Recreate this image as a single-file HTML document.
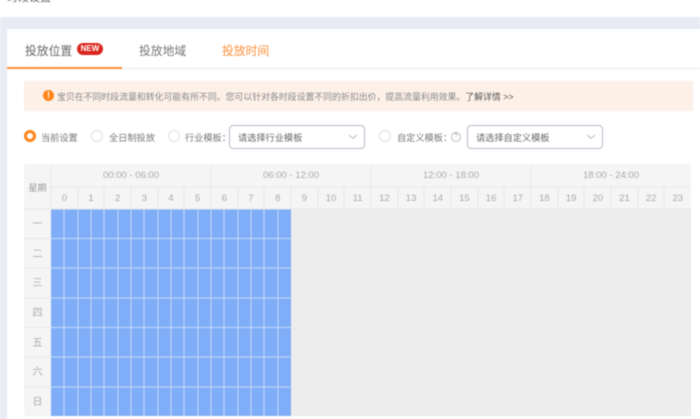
<!DOCTYPE html>
<html><head><meta charset="utf-8">
<style>
*{box-sizing:border-box}
html,body{margin:0;padding:0;width:700px;height:419px;overflow:hidden;background:#fff}
body{font-family:"Liberation Sans","Noto Sans CJK SC",sans-serif;position:relative}
#w{position:absolute;inset:0;filter:blur(.5px)}
.a{position:absolute;white-space:nowrap}
.r{position:absolute;width:12px;height:12px;border:1px solid #dcdfe6;border-radius:50%;background:#fff;top:130px}
.sel{position:absolute;top:125px;height:24px;background:#fff;border:1px solid #b9bcc8;border-radius:4px;font-size:9.2px;color:#666;line-height:24px;padding-left:8px}
.sel svg{position:absolute;right:6px;top:7px}
.c{position:absolute;text-align:center;color:#aaa}
</style></head><body><div id="w">
<div class="a" style="left:7px;top:-11px;font-size:11px;color:#666">时段设置</div>
<div class="a" style="left:0;top:17px;width:700px;height:402px;background:#e8ebf3"></div>
<div class="a" style="left:7px;top:29px;width:693px;height:390px;background:#fff"></div>
<div class="a" style="left:7px;top:68px;width:693px;height:1px;background:#eaeaea"></div>
<div class="a" style="left:7px;top:67px;width:115px;height:2px;background:#ff8c35"></div>
<div class="a" style="left:25px;top:43px;font-size:11.8px;line-height:16px;color:#666">投放位置</div>
<div class="a" style="left:77px;top:43px;width:26px;height:12px;border-radius:6px;background:#d9251d;color:#fff;font-size:8px;font-weight:bold;line-height:12px;text-align:center">NEW</div>
<div class="a" style="left:139px;top:43px;font-size:11.8px;line-height:16px;color:#777">投放地域</div>
<div class="a" style="left:222px;top:43px;font-size:11.8px;line-height:16px;color:#ff8f3a">投放时间</div>

<div class="a" style="left:24px;top:81px;width:669px;height:30px;background:#fdf0e7"></div>
<div class="a" style="left:43px;top:90px;width:11px;height:11px;border-radius:50%;background:#ff8417;color:#fff;font-size:9px;font-weight:bold;line-height:11px;text-align:center">!</div>
<div class="a" style="left:57px;top:90px;font-size:8.9px;line-height:14px;color:#888">宝贝在不同时段流量和转化可能有所不同。您可以针对各时段设置不同的折扣出价，提高流量利用效果。<span style="color:#555">了解详情 &gt;&gt;</span></div>

<div class="r" style="left:24px;border:3px solid #ff8417"></div>
<div class="a" style="left:41px;top:131px;font-size:9.2px;line-height:14px;color:#777">当前设置</div>
<div class="r" style="left:91px"></div>
<div class="a" style="left:109px;top:131px;font-size:9.2px;line-height:14px;color:#777">全日制投放</div>
<div class="r" style="left:168px"></div>
<div class="a" style="left:185px;top:131px;font-size:9.2px;line-height:14px;color:#777">行业模板：</div>
<div class="sel" style="left:229px;width:136px">请选择行业模板<svg width="10" height="8"><path d="M1 2l4 3.5L9 2" fill="none" stroke="#bbb"/></svg></div>
<div class="r" style="left:379px"></div>
<div class="a" style="left:397px;top:131px;font-size:9.2px;line-height:14px;color:#777">自定义模板：</div>
<div class="a" style="left:451px;top:132px;width:10px;height:10px;border:1px solid #bbb;border-radius:50%;font-size:7px;line-height:8px;text-align:center;color:#aaa">?</div>
<div class="sel" style="left:467px;width:136px">请选择自定义模板<svg width="10" height="8"><path d="M1 2l4 3.5L9 2" fill="none" stroke="#bbb"/></svg></div>

<div class="a" style="left:24px;top:164px;width:667px;height:252px;background:#f5f5f5;border-radius:3px"></div>
<svg class="a" style="left:0;top:0" width="700" height="419">
<rect x="51" y="209" width="640" height="207" fill="#ededed"/>
<rect x="51" y="209" width="240" height="207" fill="#80adf7"/>
<g stroke="#e8e8e8" stroke-width="1" shape-rendering="crispEdges">
<path d="M51 187H691M24 209H691"/>
<path d="M51 164V209M211 164V209M371 164V209M531 164V209"/>
<path d="M78 187V209M104 187V209M131 187V209M158 187V209M184 187V209M238 187V209M264 187V209M291 187V209M318 187V209M344 187V209M398 187V209M424 187V209M451 187V209M478 187V209M504 187V209M558 187V209M584 187V209M611 187V209M638 187V209M664 187V209"/>
<path d="M24 238.5H51M24 268H51M24 298H51M24 327.500H51M24 357H51M24 387H51"/>
</g>
<g stroke="#c5d9fa" stroke-width="1" shape-rendering="crispEdges">
<path d="M64 209V416M78 209V416M91 209V416M104 209V416M118 209V416M131 209V416M144 209V416M158 209V416M171 209V416M184 209V416M198 209V416M211 209V416M224 209V416M238 209V416M251 209V416M264 209V416M278 209V416"/>
<path d="M51 238.500H291M51 268H291M51 298H291M51 327.500H291M51 357H291M51 387H291"/>
</g>
<g stroke="#eaeaea" stroke-width="1" shape-rendering="crispEdges">
<path d="M304 209V416M318 209V416M331 209V416M344 209V416M358 209V416M371 209V416M384 209V416M398 209V416M411 209V416M424 209V416M438 209V416M451 209V416M464 209V416M478 209V416M491 209V416M504 209V416M518 209V416M531 209V416M544 209V416M558 209V416M571 209V416M584 209V416M598 209V416M611 209V416M624 209V416M638 209V416M651 209V416M664 209V416M678 209V416"/>
<path d="M291 238.500H691M291 268H691M291 298H691M291 327.500H691M291 357H691M291 387H691"/>
</g>
</svg>
<div class="c" style="left:24px;top:181px;width:27px;font-size:9px;line-height:14px;color:#999">星期</div>
<div class="c" style="left:51px;top:169px;width:160px;font-size:9.500px;line-height:13px">00:00 - 06:00</div>
<div class="c" style="left:211px;top:169px;width:160px;font-size:9.500px;line-height:13px">06:00 - 12:00</div>
<div class="c" style="left:371px;top:169px;width:160px;font-size:9.500px;line-height:13px">12:00 - 18:00</div>
<div class="c" style="left:531px;top:169px;width:160px;font-size:9.500px;line-height:13px">18:00 - 24:00</div>
<div class="a" style="left:51px;top:192px;width:640px;display:flex;font-size:9.500px;line-height:13px;color:#aaa;text-align:center">
<span style="flex:1">0</span><span style="flex:1">1</span><span style="flex:1">2</span><span style="flex:1">3</span><span style="flex:1">4</span><span style="flex:1">5</span><span style="flex:1">6</span><span style="flex:1">7</span><span style="flex:1">8</span><span style="flex:1">9</span><span style="flex:1">10</span><span style="flex:1">11</span><span style="flex:1">12</span><span style="flex:1">13</span><span style="flex:1">14</span><span style="flex:1">15</span><span style="flex:1">16</span><span style="flex:1">17</span><span style="flex:1">18</span><span style="flex:1">19</span><span style="flex:1">20</span><span style="flex:1">21</span><span style="flex:1">22</span><span style="flex:1">23</span></div>
<div class="c" style="left:24px;top:218px;width:27px;font-size:10px;line-height:14px">一</div>
<div class="c" style="left:24px;top:248px;width:27px;font-size:10px;line-height:14px">二</div>
<div class="c" style="left:24px;top:277px;width:27px;font-size:10px;line-height:14px">三</div>
<div class="c" style="left:24px;top:307px;width:27px;font-size:10px;line-height:14px">四</div>
<div class="c" style="left:24px;top:337px;width:27px;font-size:10px;line-height:14px">五</div>
<div class="c" style="left:24px;top:366px;width:27px;font-size:10px;line-height:14px">六</div>
<div class="c" style="left:24px;top:396px;width:27px;font-size:10px;line-height:14px">日</div>
</div></body></html>
